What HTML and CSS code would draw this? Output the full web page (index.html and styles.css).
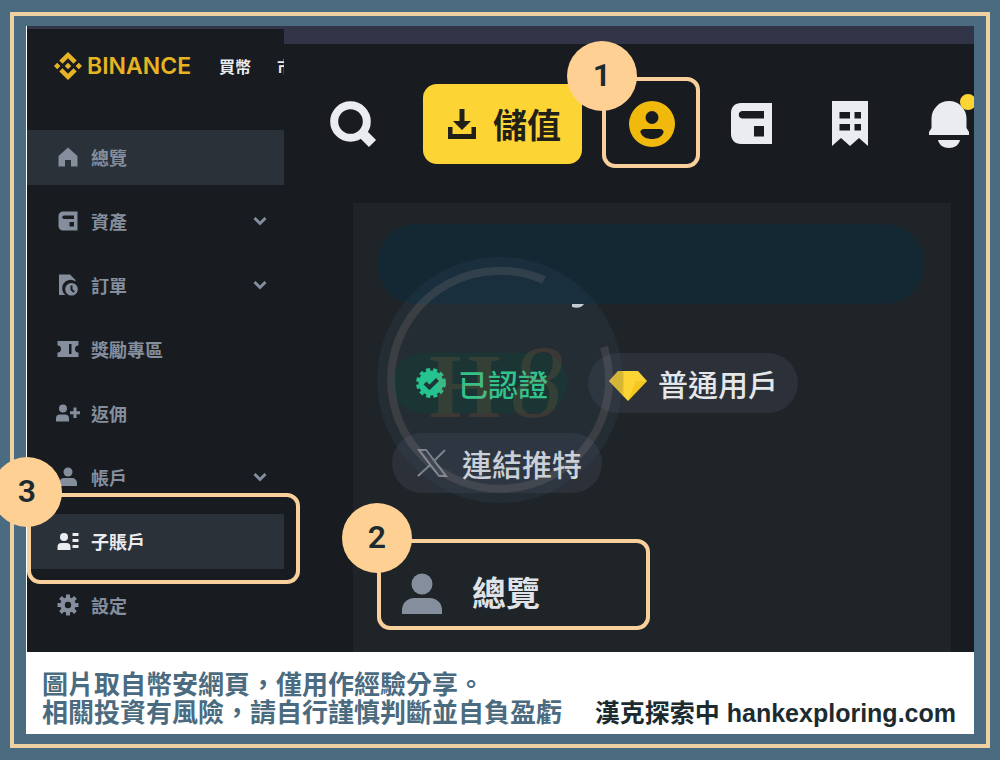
FILE: index.html
```
<!DOCTYPE html>
<html lang="zh-Hant">
<head>
    <meta charset="UTF-8">
    <meta name="viewport" content="width=device-width, initial-scale=1.0">
    <title>幣安子賬戶</title>
    <link rel="stylesheet" href="styles.css">
</head>
<body>
    <div class="frame">
        <div class="sheet">
            <div class="app">
                <aside class="sidebar">
                    <header class="brand-row">
                        <a class="brand" href="#">
                            <svg width="28" height="28" viewBox="0 0 126 126" fill="currentColor" aria-hidden="true">
                                <path d="M38.2 53.2 63 28.4l24.8 24.8 14.4-14.4L63 0 23.8 38.8zM0 63l14.4-14.4L28.8 63 14.4 77.4zM38.2 72.8 63 97.6l24.8-24.8 14.4 14.4L63 126 23.8 87.2zM97.2 63l14.4-14.4L126 63l-14.4 14.4zM77.6 63 63 77.6 48.4 63 63 48.4z"/>
                            </svg>
                            <span>BINANCE</span>
                        </a>
                        <nav class="top-links">
                            <a href="#">買幣</a>
                            <a href="#">市</a>
                        </nav>
                    </header>

                    <nav class="side-nav">
                        <a class="nav-item active" href="#">
                            <svg class="nav-icon" viewBox="0 0 24 24"><path d="M12 2.500 21.500 11v10.500H15V15H9v6.500H2.500V11z"/></svg>
                            <span>總覽</span>
                        </a>
                        <a class="nav-item" href="#">
                            <svg class="nav-icon" viewBox="0 0 24 24"><path fill-rule="evenodd" d="M7 2.500h14.500v19H7a4.500 4.500 0 0 1-4.500-4.500V7A4.500 4.500 0 0 1 7 2.500zM8 6.500a1.700 1.700 0 0 0 0 3.400h10V6.500zM13.500 13v4.500H18V13z"/></svg>
                            <span>資產</span>
                            <svg class="chevron" viewBox="0 0 14 14"><path d="M1.500 4 7 9.500 12.500 4"/></svg>
                        </a>
                        <a class="nav-item" href="#">
                            <svg class="nav-icon" viewBox="0 0 24 24"><path d="M3 1.500h11l5.500 5.500v1.500A8 8 0 0 0 9.500 22H3z"/><path fill-rule="evenodd" d="M15.500 10a6.300 6.300 0 1 1 0 12.600 6.300 6.300 0 0 1 0-12.600zM14.500 12.500v4.500l3 2.700 1.300-1.400-2.300-2.100v-3.700z"/></svg>
                            <span>訂單</span>
                            <svg class="chevron" viewBox="0 0 14 14"><path d="M1.500 4 7 9.500 12.500 4"/></svg>
                        </a>
                        <a class="nav-item" href="#">
                            <svg class="nav-icon" viewBox="0 0 24 24"><path fill-rule="evenodd" d="M1.500 4h21v4.500a3.500 3.500 0 0 0 0 7V20h-21v-4.500a3.500 3.500 0 0 0 0-7zM13 7v10h2.500V7z"/></svg>
                            <span>獎勵專區</span>
                        </a>
                        <a class="nav-item" href="#">
                            <svg class="nav-icon" viewBox="0 0 24 24"><circle cx="7" cy="7.500" r="4"/><path d="M0 20.500v-3a4 4 0 0 1 4-4h5a4 4 0 0 1 4 4v3zM17.500 6.500h3v3.700H24v3h-3.500V17h-3v-3.800H14v-3h3.500z"/></svg>
                            <span>返佣</span>
                        </a>
                        <a class="nav-item" href="#">
                            <svg class="nav-icon" viewBox="0 0 24 24"><circle cx="12" cy="7" r="4.500"/><path d="M3 21v-3a5 5 0 0 1 5-5h8a5 5 0 0 1 5 5v3z"/></svg>
                            <span>帳戶</span>
                            <svg class="chevron" viewBox="0 0 14 14"><path d="M1.500 4 7 9.500 12.500 4"/></svg>
                        </a>
                        <a class="nav-item active current" href="#">
                            <svg class="nav-icon" viewBox="0 0 24 24"><circle cx="8" cy="8" r="4"/><path d="M1.500 21v-3a4 4 0 0 1 4-4h5a4 4 0 0 1 4 4v3zM16.500 4h6v3h-6zM16.500 10h6v3h-6zM16.500 16h6v3h-6z"/></svg>
                            <span>子賬戶</span>
                            <span class="callout callout-side"><b class="badge">3</b></span>
                        </a>
                        <a class="nav-item" href="#">
                            <svg class="nav-icon" viewBox="0 0 24 24"><path fill-rule="evenodd" d="M10 1.500h4v3l1.900.8 2.200-2.200 2.800 2.800-2.200 2.200.8 1.900h3v4h-3l-.8 1.900 2.200 2.200-2.800 2.800-2.200-2.200-1.900.8v3h-4v-3l-1.900-.8-2.200 2.200-2.800-2.800 2.200-2.200-.8-1.900h-3v-4h3l.8-1.900-2.200-2.200 2.800-2.800 2.200 2.200 1.900-.8zM12 8.800a3.200 3.200 0 1 0 0 6.400 3.200 3.200 0 0 0 0-6.400z"/></svg>
                            <span>設定</span>
                        </a>
                    </nav>
                </aside>

                <main class="content">
                    <div class="toolbar">
                        <button class="icon-btn" aria-label="搜尋">
                            <svg viewBox="0 0 46 46" fill="none" stroke="currentColor"><circle cx="20.500" cy="20.500" r="16.300" stroke-width="8"/><path d="M32 32l10.500 10.500" stroke-width="10"/></svg>
                        </button>
                        <button class="deposit">
                            <svg width="30" height="32" viewBox="0 0 30 32" fill="currentColor" aria-hidden="true"><path d="M12.500 1h5v12H24l-9 9-9-9h6.500zM1 19h4.500v7h19v-7H29v12H1z"/></svg>
                            <span>儲值</span>
                        </button>
                        <div class="icons">
                            <button class="icon-btn profile" aria-label="個人中心">
                                <svg viewBox="0 0 46 46" fill="currentColor"><path fill-rule="evenodd" d="M23 0a23 23 0 1 1 0 46 23 23 0 0 1 0-46zM23 10a6.500 6.500 0 1 0 0 13 6.500 6.500 0 0 0 0-13zM16 28c-3 0-5 1.500-4.500 3.500C13 36 18 38 23 38s10-2 11.500-6.500C35 29.500 33 28 30 28z"/></svg>
                                <span class="callout callout-profile"><b class="badge">1</b></span>
                            </button>
                            <button class="icon-btn" aria-label="資產">
                                <svg viewBox="0 0 46 46" fill="currentColor"><path fill-rule="evenodd" d="M13 2h31v41H13C7 43 3 39 3 33V12C3 6 7 2 13 2zM14 10a3.800 3.800 0 0 0 0 7.500h22V10zM26 25v10.500h10V25z"/></svg>
                            </button>
                            <button class="icon-btn" aria-label="訂單">
                                <svg viewBox="0 0 46 46" fill="currentColor"><path fill-rule="evenodd" d="M5 0h36v45l-9-8-9 8-9-8-9 8zM12.500 11v6.500H23V11zM27.500 11v6.500H34V11zM12.500 23v6.500H23V23zM27.500 23v6.500H34V23z"/></svg>
                            </button>
                            <button class="icon-btn" aria-label="通知">
                                <svg viewBox="0 0 46 46" fill="currentColor"><path d="M5.500 27V17.500a17.500 17.500 0 0 1 35 0V27l2.500 4v3H3v-3zM12 39h22c-1 5-5.500 8-11 8s-10-3-11-8z"/><circle cx="42" cy="1" r="8" fill="#fcd535"/></svg>
                            </button>
                        </div>
                    </div>

                    <section class="card">
                        <div class="masked-name">
                            <svg class="name-tail" viewBox="0 0 12 4" aria-hidden="true"><path d="M0 0h12C10 3 6 5 0 3z"/></svg>
                        </div>
                        <div class="chips">
                            <span class="chip verified">
                                <svg class="seal" viewBox="0 0 36 36"><circle cx="19" cy="18" r="12.500"/><circle class="teeth" cx="19" cy="18" r="13"/><path class="tick" d="M13 18l4.500 4.500 8-8"/></svg>
                                已認證
                            </span>
                            <span class="chip">
                                <svg viewBox="0 0 40 36"><path fill="#fcd535" d="M10 6h20l9 10-19 20L1 16z"/><path fill="#e5b920" d="M10 6h6v26L1 16z" opacity=".5"/><path fill="#f0b90b" d="M20 36 39 16H28z" opacity=".5"/></svg>
                                普通用戶
                            </span>
                            <a class="chip" href="#">
                                <svg class="x-logo" viewBox="0 0 40 36"><path d="M7 5h7l20 26h-7zM33 5 22 16M18 20 6 31"/></svg>
                                連結推特
                            </a>
                        </div>
                        <a class="overview" href="#">
                            <svg viewBox="0 0 42 42" aria-hidden="true"><circle cx="21" cy="11" r="10.500"/><path d="M1 41V37a12 12 0 0 1 12-12h16a12 12 0 0 1 12 12v4z"/></svg>
                            <span>總覽</span>
                            <span class="callout callout-overview"><b class="badge">2</b></span>
                        </a>
                        <svg class="watermark" viewBox="0 0 246 246" aria-hidden="true">
                            <circle cx="123" cy="123" r="123" fill="#3f5a78" fill-opacity=".16"/>
                            <path d="M167 23A109 109 0 1 0 227 90" fill="none" stroke="#f5d6c0" stroke-opacity=".11" stroke-width="8"/>
                            <text x="52" y="160" class="mark-h">H</text>
                            <text x="134" y="160" class="mark-8">8</text>
                        </svg>
                    </section>
                </main>
            </div>

            <footer class="footer">
                <p class="notice">圖片取自幣安網頁，僅用作經驗分享。<br>相關投資有風險，請自行謹慎判斷並自負盈虧</p>
                <p class="credit">漢克探索中 hankexploring.com</p>
            </footer>
        </div>
    </div>
</body>
</html>
```
FILE: styles.css
```
* {
    box-sizing: border-box;
}

body {
    margin: 0;
    padding: 12px 10px;
    min-height: 100vh;
    display: flex;
    background-color: #4b6b80;
    font-family: "Liberation Sans", "Noto Sans CJK TC", sans-serif;
    overflow-x: hidden;
}

a {
    color: inherit;
    text-decoration: none;
}

button {
    border: none;
    padding: 0;
    background: none;
    color: inherit;
    font-family: inherit;
    cursor: pointer;
}

p {
    margin: 0;
}

.frame {
    flex: 1;
    min-width: 0;
    display: flex;
    border: 4px solid #efd0a3;
    padding: 10px 12px;
}

.sheet {
    flex: 1;
    min-width: 0;
    display: flex;
    flex-direction: column;
    background-color: #fff;
}

.app {
    flex: 1;
    display: flex;
    margin-left: 1px;
    background-color: #181b20;
}

/* Sidebar */
.sidebar {
    flex: none;
    width: 257px;
    border-top: 3px solid #323548;
    color: #848e9c;
}

.brand-row {
    display: flex;
    align-items: center;
    gap: 28px;
    padding: 23px 0 50px 27px;
    overflow: hidden;
}

.brand {
    display: flex;
    align-items: center;
    gap: 5px;
    height: 28px;
    color: #e6b422;
    font-family: Inter, sans-serif;
    font-size: 23px;
    font-weight: 600;
}

.top-links {
    display: flex;
    gap: 26px;
    color: #eaecef;
    font-size: 16px;
    font-weight: bold;
    white-space: nowrap;
}

.side-nav {
    display: flex;
    flex-direction: column;
    gap: 9px;
}

.nav-item {
    position: relative;
    display: flex;
    align-items: center;
    gap: 11px;
    height: 55px;
    padding: 0 17px 2px 29px;
    font-size: 18px;
    font-weight: bold;
}

.nav-item.active {
    background-color: #2b3139;
}

.nav-item.current {
    color: #eaecef;
}

.nav-icon {
    width: 24px;
    height: 24px;
    fill: currentColor;
}

.chevron {
    width: 14px;
    height: 14px;
    margin-left: auto;
    fill: none;
    stroke: currentColor;
    stroke-width: 3;
}

/* Main area */
.content {
    flex: 1;
    min-width: 0;
    display: flex;
    flex-direction: column;
    border-top: 18px solid #323548;
}

.toolbar {
    display: flex;
    align-items: center;
    gap: 47px;
    height: 159px;
    padding: 0 0 0 46px;
    color: #eaecef;
    overflow-x: clip;
}

.icons {
    display: flex;
    gap: 53px;
}

.icon-btn {
    position: relative;
    flex: none;
    width: 46px;
    height: 46px;
}

.icon-btn svg {
    display: block;
    width: 46px;
    height: 46px;
    overflow: visible;
}

.profile {
    color: #f0b90b;
}

.deposit {
    flex: none;
    display: flex;
    align-items: center;
    gap: 16px;
    height: 80px;
    padding: 0 21px 0 24px;
    border-radius: 14px;
    background-color: #fcd535;
    color: #202018;
    font-size: 34px;
    font-weight: bold;
}

.card {
    position: relative;
    flex: 1;
    margin: 0 23px 0 69px;
    padding: 21px 27px 21px 24px;
    background-color: #1f2428;
}

.masked-name {
    position: relative;
    height: 80px;
    border-radius: 40px;
    background-color: #142833;
}

.name-tail {
    position: absolute;
    top: 80px;
    left: 195px;
    width: 12px;
    height: 4px;
    fill: #dfe2e5;
}

.chips {
    display: flex;
    flex-wrap: wrap;
    gap: 20px;
    padding: 49px 80px 46px 15px;
}

.chip {
    display: flex;
    align-items: center;
    gap: 10px;
    height: 60px;
    padding: 0 20px;
    border-radius: 30px;
    background-color: #2b3039;
    color: #e4e7ea;
    font-size: 30px;
    font-weight: 500;
}

.chip svg {
    width: 40px;
    height: 36px;
}

.chip.verified {
    background-color: #152e28;
    color: #30d890;
}

.chip .seal {
    width: 36px;
    fill: #1fd895;
}

.teeth {
    fill: none;
    stroke: #1fd895;
    stroke-width: 4;
    stroke-dasharray: 4 3;
}

.tick {
    fill: none;
    stroke: #18302b;
    stroke-width: 4;
}

.x-logo {
    fill: none;
    stroke: #858a92;
    stroke-width: 2;
}

.overview {
    position: relative;
    display: flex;
    align-items: center;
    gap: 29px;
    width: 273px;
    height: 91px;
    padding: 18px 24px 0;
    color: #dfe2e6;
    font-size: 34px;
    font-weight: bold;
    line-height: 40px;
}

.overview svg {
    width: 42px;
    height: 42px;
    fill: #848e9c;
}

.watermark {
    position: absolute;
    top: 54px;
    left: 24px;
    width: 246px;
    height: 246px;
    pointer-events: none;
}

.mark-h,
.mark-8 {
    fill: #d08a45;
    fill-opacity: .14;
    font-family: "Liberation Serif", serif;
    font-size: 92px;
    font-weight: bold;
}

.mark-8 {
    font-size: 104px;
    font-style: italic;
    font-weight: normal;
}

/* Numbered step outlines */
.callout {
    position: absolute;
    z-index: 2;
    border: 4px solid #f9d09b;
    border-radius: 13px;
}

.callout-side {
    inset: -21px -16px -15px 0;
}

.callout-profile {
    inset: -24px -25px -21px -27px;
}

.callout-overview {
    inset: 0;
}

.badge {
    position: absolute;
    top: -40px;
    left: -39px;
    width: 70px;
    height: 70px;
    border-radius: 50%;
    background-color: #ffd093;
    color: #1c2b30;
    font-family: Roboto, sans-serif;
    font-size: 32px;
    font-weight: 600;
    line-height: 68px;
    text-align: center;
}

/* Footer */
.footer {
    display: flex;
    justify-content: space-between;
    align-items: flex-end;
    padding: 19px 18px 7px 16px;
    line-height: 28px;
    font-weight: bold;
    white-space: nowrap;
}

.notice {
    color: #4b6b80;
    font-size: 26px;
}

.credit {
    color: #1c2b30;
    font-size: 25px;
}
```
